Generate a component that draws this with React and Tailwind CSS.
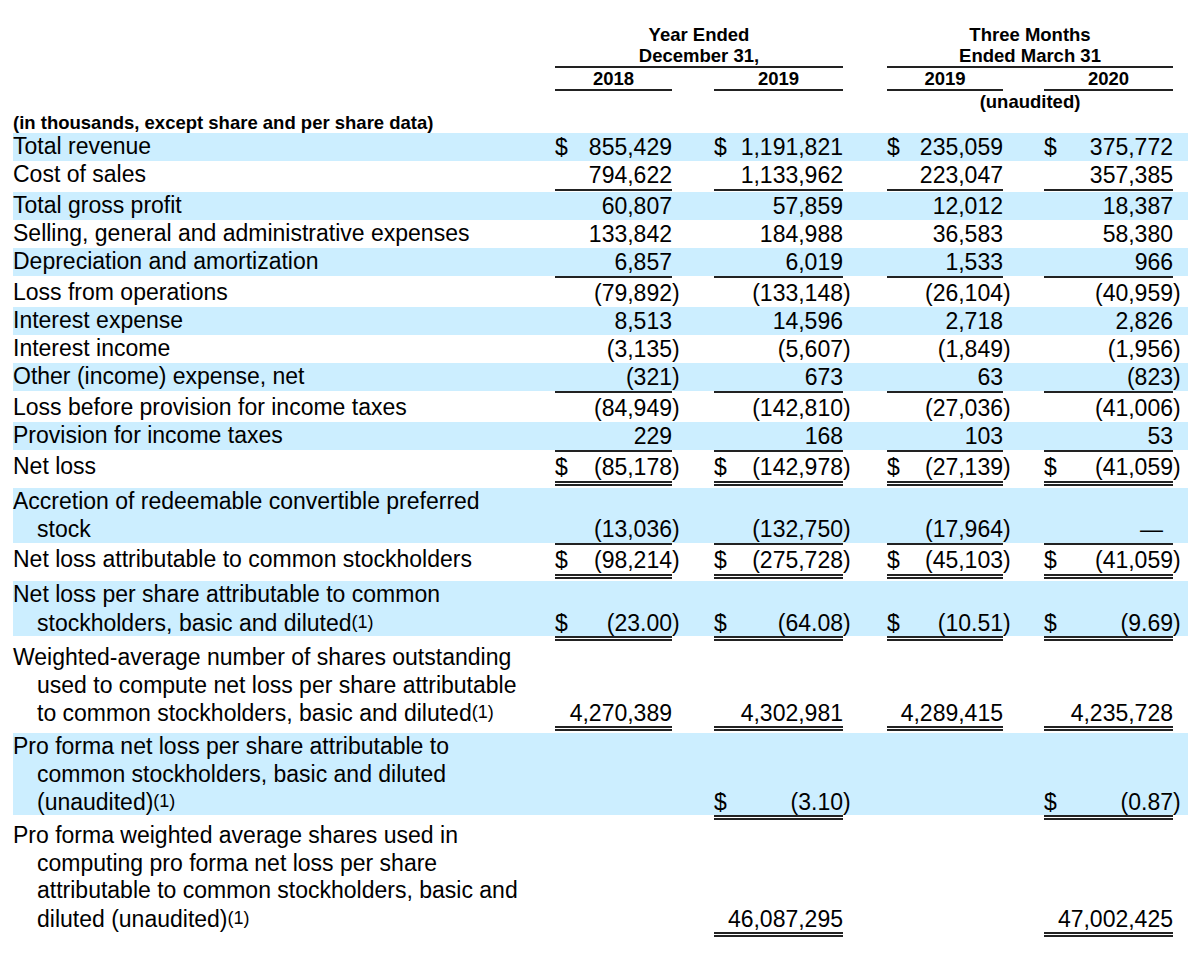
import { Fragment } from "react";

const GRID =
  "grid grid-cols-[542px_117px_42px_129px_44px_116px_41px_129px_15px]";

const rows = [
  { label: "Total revenue", band: true, dollar: true, values: ["855,429", "1,191,821", "235,059", "375,772"] },
  { label: "Cost of sales", ul: "single", values: ["794,622", "1,133,962", "223,047", "357,385"] },
  { label: "Total gross profit", band: true, values: ["60,807", "57,859", "12,012", "18,387"] },
  { label: "Selling, general and administrative expenses", values: ["133,842", "184,988", "36,583", "58,380"] },
  { label: "Depreciation and amortization", band: true, ul: "single", values: ["6,857", "6,019", "1,533", "966"] },
  { label: "Loss from operations", values: ["(79,892)", "(133,148)", "(26,104)", "(40,959)"] },
  { label: "Interest expense", band: true, values: ["8,513", "14,596", "2,718", "2,826"] },
  { label: "Interest income", values: ["(3,135)", "(5,607)", "(1,849)", "(1,956)"] },
  { label: "Other (income) expense, net", band: true, ul: "single", values: ["(321)", "673", "63", "(823)"] },
  { label: "Loss before provision for income taxes", values: ["(84,949)", "(142,810)", "(27,036)", "(41,006)"] },
  { label: "Provision for income taxes", band: true, ul: "single", values: ["229", "168", "103", "53"] },
  { label: "Net loss", dollar: true, ul: "double", values: ["(85,178)", "(142,978)", "(27,139)", "(41,059)"] },
  {
    label: ["Accretion of redeemable convertible preferred", "stock"],
    band: true,
    ul: "single",
    values: ["(13,036)", "(132,750)", "(17,964)", "—"],
  },
  { label: "Net loss attributable to common stockholders", dollar: true, ul: "double", values: ["(98,214)", "(275,728)", "(45,103)", "(41,059)"] },
  {
    label: ["Net loss per share attributable to common", "stockholders, basic and diluted"],
    note: true,
    band: true,
    dollar: true,
    ul: "double",
    extra: true,
    values: ["(23.00)", "(64.08)", "(10.51)", "(9.69)"],
  },
  {
    label: [
      "Weighted-average number of shares outstanding",
      "used to compute net loss per share attributable",
      "to common stockholders, basic and diluted",
    ],
    note: true,
    ul: "double",
    values: ["4,270,389", "4,302,981", "4,289,415", "4,235,728"],
  },
  {
    label: ["Pro forma net loss per share attributable to", "common stockholders, basic and diluted", "(unaudited)"],
    note: true,
    band: true,
    dollar: true,
    ul: "double",
    values: [null, "(3.10)", null, "(0.87)"],
  },
  {
    label: [
      "Pro forma weighted average shares used in",
      "computing pro forma net loss per share",
      "attributable to common stockholders, basic and",
      "diluted (unaudited)",
    ],
    note: true,
    ul: "double",
    values: [null, "46,087,295", null, "47,002,425"],
  },
];

const heights = { 1: "h-[28px]", 2: "h-[55px]", 3: "h-[82px]", 4: "h-[110px]" };

function Note() {
  return <span className="text-[18px] align-[3px]">(1)</span>;
}

function Row({ row }) {
  const lines = Array.isArray(row.label) ? row.label : [row.label];
  const gap = row.ul === "double" ? (row.extra ? "mb-[3px]" : "mb-[2px]") : row.ul === "single" ? "mb-px" : "";

  return (
    <div className={gap}>
      <div className={`${GRID} ${heights[lines.length]} ${row.band ? "bg-[#cceeff]" : ""}`}>
        <div className="leading-[27.5px] whitespace-nowrap">
          {lines.map((line, i) => (
            <div key={i} className={i > 0 ? "pl-[24px]" : ""}>
              {line}
              {row.note && i === lines.length - 1 && <Note />}
            </div>
          ))}
        </div>
        {row.values.map((v, i) => {
          const neg = v && v.endsWith(")");
          const num = neg ? v.slice(0, -1) : v;
          return (
            <Fragment key={i}>
              <div className="flex items-end leading-[27.5px]">
                {v && row.dollar && <span>$</span>}
                {v && <span className={`ml-auto ${v === "—" ? "pr-[10px]" : ""}`}>{num}</span>}
              </div>
              <div className="flex items-end leading-[27.5px]">{neg && <span>)</span>}</div>
            </Fragment>
          );
        })}
      </div>
      {row.ul && (
        <div className={GRID}>
          <div />
          {row.values.map((v, i) => (
            <Fragment key={i}>
              {v ? (
                row.ul === "double" ? (
                  <div className="h-[5px] border-y-2 border-[#222]" />
                ) : (
                  <div className="h-[2px] bg-[#222]" />
                )
              ) : (
                <div />
              )}
              <div />
            </Fragment>
          ))}
        </div>
      )}
    </div>
  );
}

export default function App() {
  const head = "font-bold text-[18.5px] leading-[21px] text-center";
  return (
    <div className="min-h-screen bg-white text-black font-['Liberation_Sans',Arial,sans-serif] text-[23px] pt-[24px]">
      <div className="ml-[13px] w-[1175px]">
        <div className={GRID}>
          <div className={`col-start-2 col-span-3 border-b-2 border-[#222] ${head}`}>
            Year Ended
            <br />
            December 31,
          </div>
          <div className={`col-start-6 col-span-3 border-b-2 border-[#222] ${head}`}>
            Three Months
            <br />
            Ended March 31
          </div>
        </div>
        <div className={GRID}>
          <div className={`col-start-2 border-b-2 border-[#222] ${head}`}>2018</div>
          <div className={`col-start-4 border-b-2 border-[#222] ${head}`}>2019</div>
          <div className={`col-start-6 border-b-2 border-[#222] ${head}`}>2019</div>
          <div className={`col-start-8 border-b-2 border-[#222] ${head}`}>2020</div>
        </div>
        <div className={GRID}>
          <div className={`col-start-6 col-span-3 ${head}`}>(unaudited)</div>
        </div>
        <div className="font-bold text-[18.5px] leading-[21px]">(in thousands, except share and per share data)</div>

        {rows.map((row, i) => (
          <Row key={i} row={row} />
        ))}
      </div>
    </div>
  );
}
